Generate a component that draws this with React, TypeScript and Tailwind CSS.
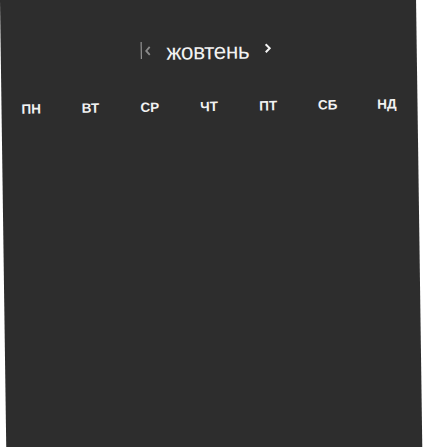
import React from "react";

const days = ["ПН", "ВТ", "СР", "ЧТ", "ПТ", "СБ", "НД"];

export default function App() {
  return (
    <div className="w-[438px] h-[447px] bg-white overflow-hidden relative">
      <div
        className="w-[416px] h-[470px] bg-[#2d2d2d] origin-top-left rotate-[-0.8deg]"
        style={{ fontFamily: '"Liberation Sans", Arial, sans-serif' }}
      >
        <div className="flex items-center justify-center pt-[35px] h-[70px] pr-[5px]">
          <div className="flex items-center">
            <span className="block w-[1px] h-[17px] bg-[#a8a8a8]" />
            <svg width="8" height="10" viewBox="0 0 8 10" className="ml-[2px] mt-[1px]">
              <path d="M6 1 L2.5 5 L6 9" fill="none" stroke="#8a8a8a" strokeWidth="1.8" />
            </svg>
          </div>
          <span className="text-[22.5px] leading-none text-[#f2f2f2] mx-[15px] pt-[6px] tracking-[-0.4px]">
            жовтень
          </span>
          <svg width="8" height="10" viewBox="0 0 8 10" className="mb-[1px]">
            <path d="M2 1 L6 5 L2 9" fill="none" stroke="#f2f2f2" strokeWidth="2" />
          </svg>
        </div>
        <div className="grid grid-cols-7 w-[415px] mt-[33px]">
          {days.map((d) => (
            <div
              key={d}
              className="text-center text-[13.5px] font-bold text-[#f2f2f2] leading-none"
            >
              {d}
            </div>
          ))}
        </div>
      </div>
    </div>
  );
}
